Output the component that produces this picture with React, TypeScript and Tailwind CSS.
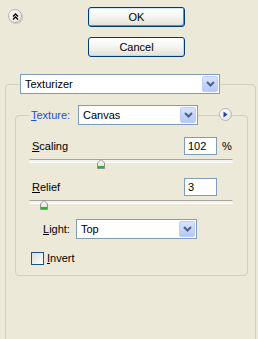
import React from "react";

function Chevron() {
  return (
    <svg width="9" height="6" viewBox="0 0 9 6">
      <path d="M1 1 L4.5 4.5 L8 1" fill="none" stroke="#4d6185" strokeWidth="2" />
    </svg>
  );
}

function Select({ value, className }: { value: string; className: string }) {
  return (
    <div className={`flex items-stretch border border-[#7f9db9] bg-white p-px ${className}`}>
      <span className="flex flex-1 items-center pl-[3px] text-[11px] text-black">{value}</span>
      <span className="flex w-[16px] items-center justify-center rounded-[2px] border border-[#bccdf7] bg-gradient-to-b from-[#d8e3fe] to-[#b4c8f8]">
        <Chevron />
      </span>
    </div>
  );
}

function Button({ label, focused }: { label: string; focused?: boolean }) {
  return (
    <button
      className={`flex h-[20px] w-[97px] items-center justify-center rounded-[3px] border border-[#003c74] bg-gradient-to-b from-white via-[#f4f4f0] to-[#e3e0d6] text-[11px] text-black ${
        focused ? "shadow-[inset_-1px_-1px_0_#6982ee,inset_1px_1px_0_#cee7ff]" : "shadow-[inset_-1px_-1px_0_#d6d0c5]"
      }`}
    >
      {label}
    </button>
  );
}

function Thumb() {
  return (
    <svg width="8" height="10" viewBox="0 0 8 10">
      <defs>
        <linearGradient id="tg" x1="0" y1="0" x2="0" y2="1">
          <stop offset="0" stopColor="#ffffff" />
          <stop offset="1" stopColor="#d9dad3" />
        </linearGradient>
      </defs>
      <path d="M4 0.5 L7.5 4 V9.5 H0.5 V4 Z" fill="url(#tg)" stroke="#8a9590" />
      <rect x="1" y="7" width="6" height="2" fill="#2bb52b" />
    </svg>
  );
}

function Slider({ thumb }: { thumb: string }) {
  return (
    <div className="relative ml-[13px] h-[10px] w-[204px]">
      <div className="mt-[4px] h-[3px] rounded-full border-t border-[#a5a49d] bg-[#f4f3ee] shadow-[0_1px_0_#ffffff]" />
      <div className={`absolute top-0 ${thumb}`}>
        <Thumb />
      </div>
    </div>
  );
}

function NumberField({ value }: { value: string }) {
  return (
    <div className="flex h-[18px] w-[33px] items-center border border-[#7f9db9] bg-white pl-[3px] text-[11px] text-black">
      {value}
    </div>
  );
}

export default function App() {
  return (
    <div className="h-[339px] w-[258px] overflow-hidden bg-[#ece9d8] font-['Liberation_Sans',sans-serif] text-[11px] text-black">
      <div className="flex pl-[8px] pt-[7px]">
        <div className="mt-[2px] flex h-[14px] w-[14px] items-center justify-center rounded-full border border-[#b3b2a8] bg-gradient-to-br from-white to-[#e6e5de] shadow-[1px_1px_1px_rgba(0,0,0,0.15)]">
          <svg width="7" height="7" viewBox="0 0 7 7">
            <path d="M1 3.5 L3.5 1 L6 3.5 M1 6.5 L3.5 4 L6 6.5" fill="none" stroke="#000" strokeWidth="1.3" />
          </svg>
        </div>
        <div className="ml-[66px] flex flex-col gap-[10px]">
          <Button label="OK" focused />
          <Button label="Cancel" />
        </div>
      </div>

      <fieldset className="ml-[5px] mt-[17px] h-[300px] w-[251px] rounded-[4px] border border-[#d0d0bf] p-0">
        <legend className="ml-[14px] p-0">
          <Select value="Texturizer" className="h-[20px] w-[200px]" />
        </legend>

        <fieldset className="relative ml-[9px] mt-[11px] w-[233px] rounded-[4px] border border-[#d0d0bf] p-0 pb-[8px]">
          <legend className="ml-[13px] p-0">
            <div className="flex items-center pl-[2px]">
              <span className="w-[47px] text-[#1a4fd6]">
                <u>T</u>exture:
              </span>
              <Select value="Canvas" className="h-[20px] w-[120px]" />
            </div>
          </legend>
          <div className="absolute left-[203px] top-[-17px] flex h-[13px] w-[13px] items-center justify-center rounded-full border border-[#b7b6ad] bg-gradient-to-br from-white to-[#e4e3dc]">
            <svg width="5" height="7" viewBox="0 0 5 7">
              <path d="M0.5 0.5 L4.5 3.5 L0.5 6.5 Z" fill="#1d3f9a" />
            </svg>
          </div>

          <div className="mt-[12px] flex items-center">
            <span className="ml-[16px] w-[152px]">
              <u>S</u>caling
            </span>
            <NumberField value="102" />
            <span className="ml-[5px]">%</span>
          </div>
          <div className="mt-[3px]">
            <Slider thumb="left-[68px]" />
          </div>

          <div className="mt-[9px] flex items-center">
            <span className="ml-[16px] w-[152px]">
              <u>R</u>elief
            </span>
            <NumberField value="3" />
          </div>
          <div className="mt-[4px]">
            <Slider thumb="left-[11px]" />
          </div>

          <div className="mt-[9px] flex items-center">
            <span className="ml-[27px] w-[33px]">
              <u>L</u>ight:
            </span>
            <Select value="Top" className="h-[20px] w-[121px]" />
          </div>

          <div className="mt-[11px] flex items-center">
            <span className="ml-[15px] h-[13px] w-[13px] border border-[#1c5180] bg-gradient-to-br from-[#dcdcd7] to-white" />
            <span className="ml-[3px]">
              <u>I</u>nvert
            </span>
          </div>
        </fieldset>
      </fieldset>
    </div>
  );
}
